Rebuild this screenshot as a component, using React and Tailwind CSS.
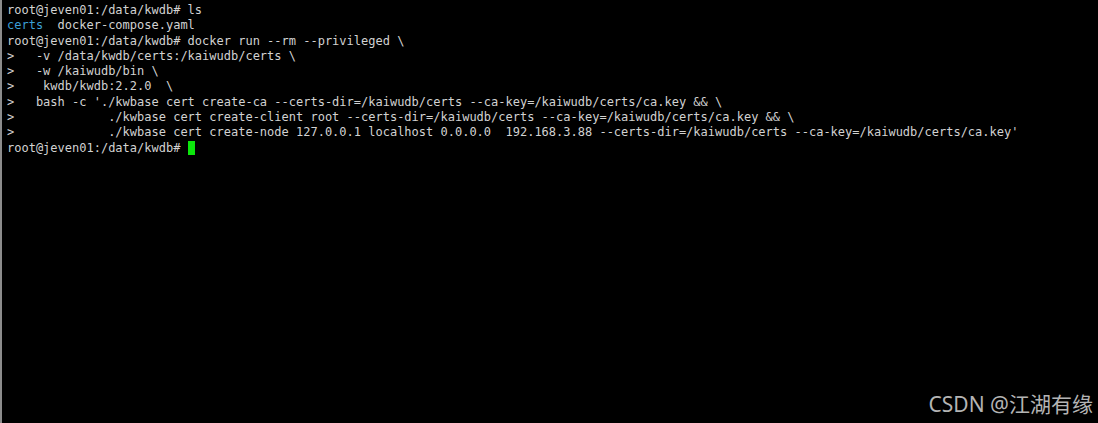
const lines = [
  [{ t: 'root@jeven01:/data/kwdb# ls' }],
  [{ t: 'certs', c: 'text-[#3b9fd6]' }, { t: '  docker-compose.yaml' }],
  [{ t: 'root@jeven01:/data/kwdb# docker run --rm --privileged \\' }],
  [{ t: '>   -v /data/kwdb/certs:/kaiwudb/certs \\' }],
  [{ t: '>   -w /kaiwudb/bin \\' }],
  [{ t: '>    kwdb/kwdb:2.2.0  \\' }],
  [{ t: ">   bash -c './kwbase cert create-ca --certs-dir=/kaiwudb/certs --ca-key=/kaiwudb/certs/ca.key && \\" }],
  [{ t: '>             ./kwbase cert create-client root --certs-dir=/kaiwudb/certs --ca-key=/kaiwudb/certs/ca.key && \\' }],
  [{ t: ">             ./kwbase cert create-node 127.0.0.1 localhost 0.0.0.0  192.168.3.88 --certs-dir=/kaiwudb/certs --ca-key=/kaiwudb/certs/ca.key'" }],
];

export default function App() {
  return (
    <div className="flex h-[423px] w-[1098px] flex-col overflow-hidden border-l-2 border-[#8c8c8c] bg-black">
      {/* terminal output */}
      <div className="pl-[5px] pt-[3px] font-['DejaVu_Sans_Mono',monospace] text-[12px] leading-[15.3px] text-[#d2d2d2]">
        {lines.map((line, i) => (
          <div key={i} className="whitespace-pre">
            {line.map((s, j) => (
              <span key={j} className={s.c}>{s.t}</span>
            ))}
          </div>
        ))}
        <div className="flex items-center whitespace-pre">
          <span>root@jeven01:/data/kwdb# </span>
          <span className="inline-block h-[14px] w-[7px] bg-[#0ce60c]" />
        </div>
      </div>

      {/* watermark */}
      <div className="mt-auto self-end pb-[6px] pr-[5px] font-['Noto_Sans','Noto_Sans_CJK_SC',sans-serif] text-[21px] leading-[25px] text-[#b4b4b4]">
        CSDN @江湖有缘
      </div>
    </div>
  );
}
